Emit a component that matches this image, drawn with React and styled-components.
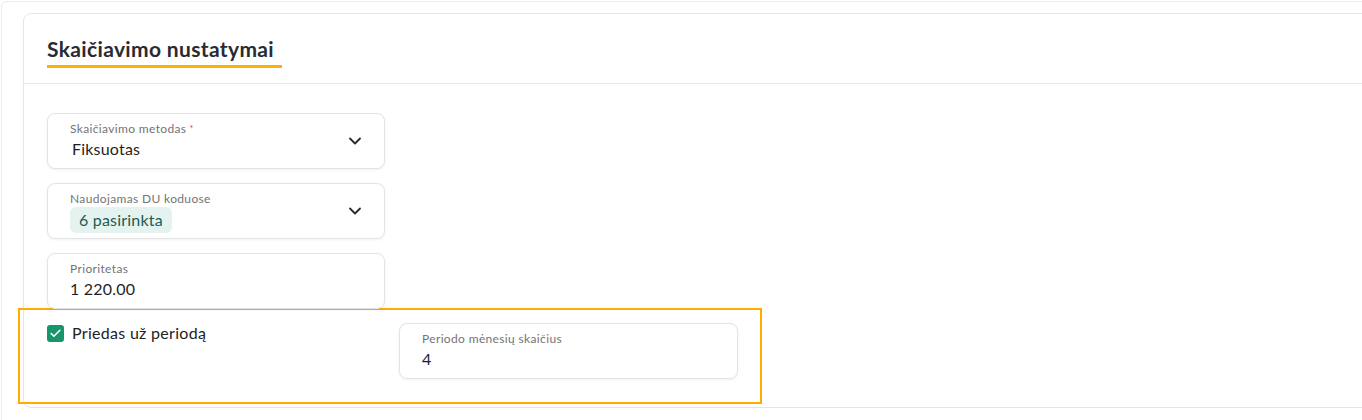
import styled, { createGlobalStyle } from "styled-components";
import { ChevronDown, Check } from "lucide-react";

const GlobalStyle = createGlobalStyle`
  body {
    margin: 0;
    background: #ffffff;
    font-family: Lato, "Noto Sans", sans-serif;
    overflow: hidden;
  }
`;

function SelectField(props) {
  return (
    <FieldBox>
      <FieldContent>
        <FieldLabel>
          {props.label}
          {props.required && <Required>*</Required>}
        </FieldLabel>
        {props.children}
      </FieldContent>
      <ChevronDown size={20} strokeWidth={2.2} color="#2a2a2a" />
    </FieldBox>
  );
}

function InputField(props) {
  return (
    <FieldBox>
      <FieldContent>
        <FieldLabel>{props.label}</FieldLabel>
        <FieldValue $dark={props.dark}>{props.value}</FieldValue>
      </FieldContent>
    </FieldBox>
  );
}

function App() {
  return (
    <>
      <GlobalStyle />
      <Page>
        <Frame>
          <Card>
            <CardHeader>
              <CardTitle>Skaičiavimo nustatymai</CardTitle>
            </CardHeader>
            <CardBody>
              <FieldStack>
                <SelectField label="Skaičiavimo metodas" required>
                  <FieldValue $indent>Fiksuotas</FieldValue>
                </SelectField>
                <SelectField label="Naudojamas DU koduose">
                  <Chip>6 pasirinkta</Chip>
                </SelectField>
                <InputField label="Prioritetas" value="1 220.00" />
              </FieldStack>
              <PeriodRow>
                <CheckRow>
                  <CheckBox>
                    <Check size={13} strokeWidth={3} color="#ffffff" />
                  </CheckBox>
                  <CheckLabel>Priedas už periodą</CheckLabel>
                </CheckRow>
                <InputField label="Periodo mėnesių skaičius" value="4" dark />
              </PeriodRow>
            </CardBody>
          </Card>
        </Frame>
      </Page>
    </>
  );
}

export default App;

const Page = styled.div`
  padding: 1px 0 0 1px;
  height: 420px;
  box-sizing: border-box;
`;

const Frame = styled.div`
  width: calc(100% + 40px);
  border: 1px solid #ececec;
  border-radius: 6px;
  padding: 11px 0 20px 21px;
  box-sizing: border-box;
`;

const Card = styled.div`
  border: 1px solid #e6e6e6;
  border-radius: 8px;
  background: #ffffff;
`;

const CardHeader = styled.div`
  padding: 23px 0 15px 23px;
  border-bottom: 1px solid #e8e8e8;
`;

const CardTitle = styled.h2`
  display: inline-block;
  margin: 0;
  padding: 0 8px 4px 0;
  border-bottom: 3px solid #ffb000;
  font-size: 21px;
  line-height: 24px;
  font-weight: 700;
  letter-spacing: 0.35px;
  color: #2a2a33;
`;

const CardBody = styled.div`
  padding: 29px 23px 3px;
`;

const FieldStack = styled.div`
  display: flex;
  flex-direction: column;
  gap: 14px;
  width: 338px;
`;

const FieldBox = styled.div`
  display: flex;
  align-items: center;
  height: 56px;
  box-sizing: border-box;
  padding: 0 19px 0 22px;
  border: 1px solid #e4e4e4;
  border-radius: 8px;
  background: #ffffff;
  box-shadow: 0 1px 3px rgba(0, 0, 0, 0.06);
`;

const FieldContent = styled.div`
  flex: 1;
  display: flex;
  flex-direction: column;
  align-self: stretch;
  padding-top: 7px;
`;

const FieldLabel = styled.div`
  font-size: 12px;
  line-height: 15px;
  letter-spacing: 0.35px;
  color: #747474;
`;

const Required = styled.span`
  color: #e5345a;
  margin-left: 3px;
  font-size: 9px;
  vertical-align: top;
`;

const FieldValue = styled.div`
  margin-top: 3px;
  padding-left: ${(p) => (p.$indent ? "2px" : "0")};
  font-size: 16px;
  line-height: 20px;
  letter-spacing: 0.2px;
  color: ${(p) => (p.$dark ? "#1b1b3a" : "#1f1f1f")};
`;

const Chip = styled.div`
  align-self: flex-start;
  margin-top: 1px;
  height: 26px;
  padding: 0 9px;
  border-radius: 6px;
  background: #e4f3ef;
  font-size: 16px;
  line-height: 26px;
  letter-spacing: 0.2px;
  color: #1d5b52;
`;

const PeriodRow = styled.div`
  display: grid;
  grid-template-columns: 338px 339px;
  column-gap: 14px;
  align-items: start;
  width: fit-content;
  margin: -1px 0 0 -29px;
  padding: 13px 22px 23px 27px;
  border: 2px solid #ffab00;
`;

const CheckRow = styled.div`
  display: flex;
  align-items: center;
  gap: 8px;
`;

const CheckBox = styled.span`
  display: flex;
  align-items: center;
  justify-content: center;
  width: 17px;
  height: 17px;
  border-radius: 3px;
  background: #17966a;
`;

const CheckLabel = styled.span`
  font-size: 16px;
  line-height: 20px;
  letter-spacing: 0.3px;
  color: #222222;
`;
